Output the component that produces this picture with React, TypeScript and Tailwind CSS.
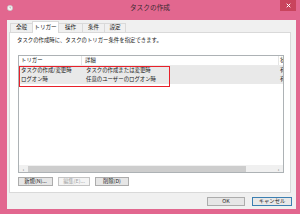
import React from "react";

const font = { fontFamily: '"Noto Sans CJK JP", "Noto Sans", sans-serif' };

function Tab({ label, width, active }: { label: string; width: string; active?: boolean }) {
  if (active) {
    return (
      <div
        className={`relative z-10 -mb-px -ml-px flex h-[12px] items-center justify-center border border-b-0 border-[#d9d9d9] bg-white text-[5.6px] leading-none text-[#1a1a1a] ${width}`}
      >
        {label}
      </div>
    );
  }
  return (
    <div
      className={`-ml-px mt-[2px] flex h-[9px] items-center justify-center border border-b-0 border-[#d9d9d9] bg-[#f0f0f0] text-[5.6px] leading-none text-[#1a1a1a] first:ml-0 ${width}`}
    >
      {label}
    </div>
  );
}

function Button({
  label,
  width,
  disabled,
  primary,
}: {
  label: string;
  width: string;
  disabled?: boolean;
  primary?: boolean;
}) {
  const tone = disabled
    ? "border-[#c4c4c4] bg-[#f4f4f4] text-[#a2a2a2]"
    : primary
      ? "border-[#3c7fb1] bg-[#e8e8e8] text-[#1a1a1a]"
      : "border-[#acacac] bg-[#e6e6e6] text-[#1a1a1a]";
  return (
    <div
      className={`flex h-[9px] items-center justify-center border text-[5.3px] leading-none ${tone} ${width}`}
    >
      {label}
    </div>
  );
}

export default function App() {
  const rows = [
    ["タスクの作成/変更時", "タスクの作成または変更時", "有効"],
    ["ログオン時", "任意のユーザーのログオン時", "有効"],
  ];

  return (
    <div className="flex h-[214px] w-[300px] flex-col bg-[#e2678f]" style={font}>
      {/* title bar */}
      <div className="relative flex h-[20px] shrink-0 items-start">
        <svg className="ml-[7px] mt-[5px]" width="6" height="6" viewBox="0 0 6 6">
          <circle cx="3" cy="3" r="2.7" fill="#f4f4f4" stroke="#b8b8b8" strokeWidth="0.5" />
          <path d="M3 1.4V3h1.2" stroke="#8a8a8a" strokeWidth="0.5" fill="none" />
        </svg>
        <div className="absolute left-0 right-0 top-[4px] text-center text-[6.7px] leading-none text-[#3a2a30]">
          タスクの作成
        </div>
        <div className="absolute right-[4px] top-0 flex h-[11px] w-[16px] items-center justify-center bg-[#c9445d]">
          <svg width="5" height="5" viewBox="0 0 5 5">
            <path d="M0.7 0.7L4.3 4.3M4.3 0.7L0.7 4.3" stroke="#ffffff" strokeWidth="1" />
          </svg>
        </div>
      </div>

      {/* dialog body */}
      <div className="mb-[5px] ml-[7px] mr-[4px] flex flex-1 flex-col bg-[#f0f0f0]">
        <div className="ml-[3px] mt-px flex items-start">
          <Tab label="全般" width="w-[23px]" />
          <Tab label="トリガー" width="w-[27px]" active />
          <Tab label="操作" width="w-[25px]" />
          <Tab label="条件" width="w-[23px]" />
          <Tab label="設定" width="w-[22px]" />
        </div>

        {/* tab panel */}
        <div className="ml-[2px] mr-[5px] flex h-[161px] flex-col border border-[#d9d9d9] bg-white pl-[7px] pr-[7px]">
          <div className="mt-[4px] text-[5.4px] leading-[6px] text-[#1a1a1a]">
            タスクの作成時に、タスクのトリガー条件を指定できます。
          </div>

          {/* list view */}
          <div className="relative ml-px mt-[12px] flex h-[118px] w-[266px] flex-col border border-[#adb2b5] bg-white">
            <div className="flex h-[10px] shrink-0 overflow-hidden border-b border-[#eaeaea] text-[5.4px] leading-none text-[#1a1a1a]">
              <div className="flex w-[63px] shrink-0 items-center border-r border-[#e5e5e5] pl-[2px]">トリガー</div>
              <div className="flex w-[197px] shrink-0 items-center border-r border-[#e5e5e5] pl-[3px]">詳細</div>
              <div className="flex shrink-0 items-center pl-[1px]">状態</div>
            </div>
            <div className="flex flex-col bg-white">
              {rows.map((r, i) => (
                <div
                  key={i}
                  className="flex h-[9px] overflow-hidden bg-[#e9e9e9] text-[5.4px] leading-none text-[#1a1a1a]"
                >
                  <div className="flex w-[63px] shrink-0 items-center pl-[2px]">{r[0]}</div>
                  <div className="flex w-[197px] shrink-0 items-center pl-[4px]">{r[1]}</div>
                  <div className="flex shrink-0 items-center pl-[1px]">{r[2]}</div>
                </div>
              ))}
            </div>
            <div className="flex-1" />
            {/* horizontal scrollbar */}
            <div className="flex h-[7px] shrink-0 items-center bg-[#f0f0f0] text-[5px] leading-none text-[#606060]">
              <div className="flex w-[9px] items-center justify-center">‹</div>
              <div className="h-[6px] w-[218px] bg-[#cdcdcd]" />
              <div className="flex-1" />
              <div className="flex w-[9px] items-center justify-center">›</div>
            </div>

            {/* annotation */}
            <div className="pointer-events-none absolute left-0 top-[10px] h-[21px] w-[151px] border-[1.5px] border-[#e8202a]" />
          </div>

          <div className="ml-px mt-[4px] flex gap-[5px]">
            <Button label="新規(N)..." width="w-[35px]" />
            <Button label="編集(E)..." width="w-[32px]" disabled />
            <Button label="削除(D)" width="w-[34px]" />
          </div>
        </div>

        <div className="mr-[4px] mt-[4px] flex justify-end gap-[7px]">
          <Button label="OK" width="w-[38px]" />
          <Button label="キャンセル" width="w-[40px]" primary />
        </div>
      </div>
    </div>
  );
}
